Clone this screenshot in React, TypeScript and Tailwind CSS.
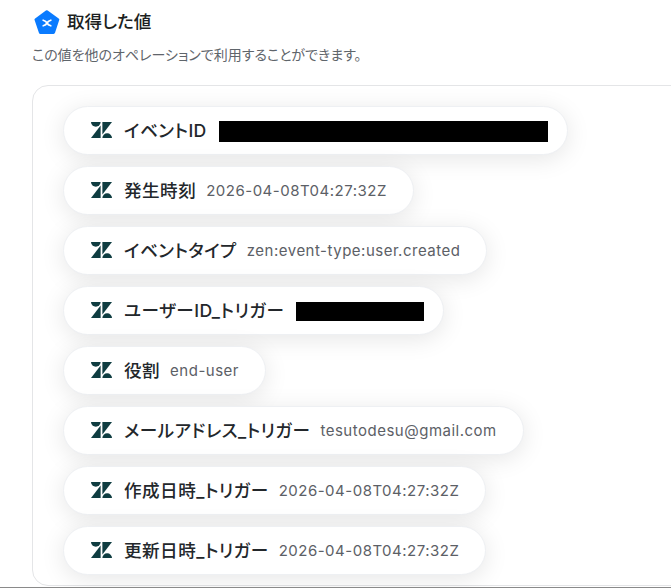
const fontStack = 'Inter, "Noto Sans CJK JP", sans-serif';

type Row = {
  label: string;
  value?: string;
  redacted?: string;
};

const rows: Row[] = [
  { label: "イベントID", redacted: "w-[329px] h-[21px] mr-[1px]" },
  { label: "発生時刻", value: "2026-04-08T04:27:32Z" },
  { label: "イベントタイプ", value: "zen:event-type:user.created" },
  { label: "ユーザーID_トリガー", redacted: "w-[128px] h-[19px] mr-[1px]" },
  { label: "役割", value: "end-user" },
  { label: "メールアドレス_トリガー", value: "tesutodesu@gmail.com" },
  { label: "作成日時_トリガー", value: "2026-04-08T04:27:32Z" },
  { label: "更新日時_トリガー", value: "2026-04-08T04:27:32Z" },
];

function ZendeskIcon() {
  return (
    <svg viewBox="0 0 24 19" preserveAspectRatio="none" className="w-[21px] h-[16px] -mt-[1px] shrink-0" fill="#0f3d41">
      <path d="M11 4.2V19H0L11 4.2z" />
      <path d="M11 0a5.5 5.5 0 0 1-11 0h11z" />
      <path d="M13 19a5.5 5.5 0 0 1 11 0H13z" />
      <path d="M13 14.8V0h11L13 14.8z" />
    </svg>
  );
}

function PentagonLogo() {
  return (
    <svg viewBox="0 0 26 25" className="w-[26px] h-[25px] shrink-0">
      <path
        d="M12.8 1.8 L23.8 9.6 L19.6 22.4 L6.4 22.4 L2 9.6 Z"
        fill="#0a7bff"
        stroke="#0a7bff"
        strokeWidth="3"
        strokeLinejoin="round"
      />
      <path d="M9.2 10.2 Q12 11 13 13 Q14 15 16.8 15.8" stroke="#fff" strokeWidth="1.7" fill="none" strokeLinecap="round" />
      <path d="M16.8 10.2 Q14 11 13 13 Q12 15 9.2 15.8" stroke="#fff" strokeWidth="1.7" fill="none" strokeLinecap="round" />
    </svg>
  );
}

function Pill({ row }: { row: Row }) {
  return (
    <div className="flex items-center w-fit h-[49px] pl-[27px] pr-[18px] bg-white rounded-full border border-[#eef0f3] shadow-[0_4px_24px_rgba(0,0,0,0.1)]">
      <ZendeskIcon />
      <span className="ml-[12px] text-[17.6px] tracking-[0.45px] font-medium text-[#23272b] whitespace-nowrap [font-feature-settings:'palt']">
        {row.label}
      </span>
      {row.value && (
        <span className="ml-[10px] mr-[8px] text-[15px] tracking-[0.5px] text-[#5c6066] whitespace-nowrap">{row.value}</span>
      )}
      {row.redacted && <div className={`ml-[12px] mt-[1px] bg-black ${row.redacted}`} />}
    </div>
  );
}

export default function App() {
  return (
    <div
      className="w-[671px] h-[588px] overflow-hidden bg-white border-b border-[#8a8a8a]"
      style={{ fontFamily: fontStack }}
    >
      <div className="flex items-center gap-[7px] pl-[34px] pt-[9px]">
        <PentagonLogo />
        <h2 className="text-[17.6px] font-medium text-[#1c1f22] [font-feature-settings:'palt']">取得した値</h2>
      </div>
      <p className="ml-[32px] mt-[9px] text-[14px] text-[#5f656b] [font-feature-settings:'palt']">
        この値を他のオペレーションで利用することができます。
      </p>
      <div className="ml-[32px] mt-[20px] w-[720px] h-[501px] border border-[#e4e5e7] rounded-[16px] pl-[30px] pt-[20px] flex flex-col gap-[11px]">
        {rows.map((row) => (
          <Pill key={row.label} row={row} />
        ))}
      </div>
    </div>
  );
}
